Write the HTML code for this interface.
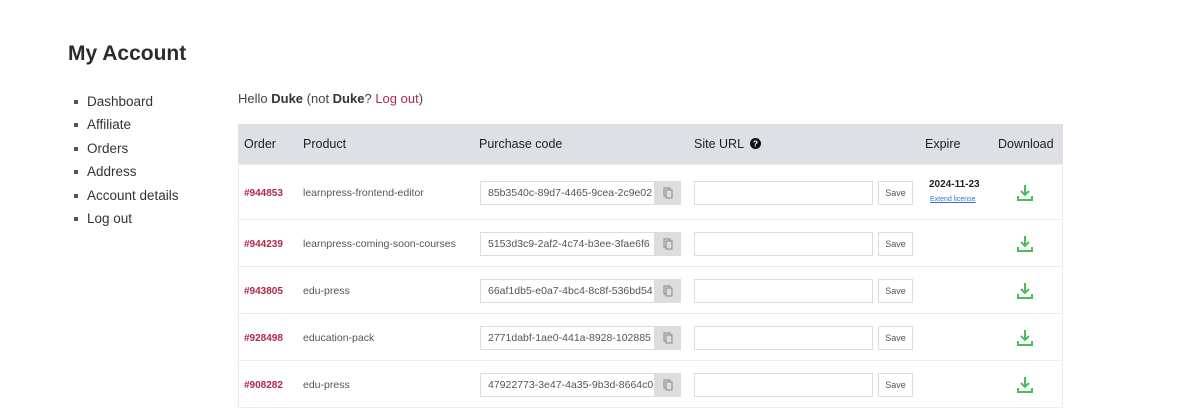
<!DOCTYPE html>
<html><head><meta charset="utf-8"><style>
*{box-sizing:border-box;margin:0;padding:0}
body{width:1200px;height:419px;background:#fff;font-family:"Liberation Sans",sans-serif;color:#333;position:relative;overflow:hidden}
.a{position:absolute;white-space:nowrap}
h1{position:absolute;left:68px;top:42px;font-size:21px;font-weight:bold;color:#2b2b2b}
.menu li{position:absolute;left:87px;font-size:13.5px;color:#333;list-style:none}
.menu li:before{content:"";position:absolute;left:-13px;top:6px;width:4px;height:4px;background:#555}
.tbl{position:absolute;left:238px;top:124px;width:825px;height:284px;border:1px solid #ececec;border-top:none}
.hd{position:absolute;left:238px;top:124px;width:825px;height:40px;background:#dde0e5}
.hd span{position:absolute;top:13px;font-size:12.5px;color:#222}
.row{position:absolute;left:238px;width:825px;border-top:1px solid #ececec}
.ord{position:absolute;left:6px;font-size:10px;font-weight:bold;color:#b0284a}
.prod{position:absolute;left:65px;font-size:10.5px;color:#555}
.pc{position:absolute;left:242px;width:201px;height:24px;border:1px solid #ddd;background:#fff;font-size:10.5px;color:#555;padding:5px 0 0 7px;overflow:hidden}
.pc .cp{position:absolute;right:0;top:0;width:26px;height:22px;background:#ddd}
.su{position:absolute;left:456px;width:179px;height:24px;border:1px solid #ddd;background:#fff}
.sv{position:absolute;left:640px;width:35px;height:24px;border:1px solid #ddd;background:#fff;font-size:9px;color:#555;text-align:center;line-height:22px}
.dl{position:absolute;left:779px}
</style></head><body>
<h1>My Account</h1>
<ul class="menu">
<li style="top:94px">Dashboard</li>
<li style="top:117px">Affiliate</li>
<li style="top:141px">Orders</li>
<li style="top:164px">Address</li>
<li style="top:188px">Account details</li>
<li style="top:211px">Log out</li>
</ul>
<div class="a" style="left:238px;top:91px;font-size:13px;color:#444">Hello <b style="color:#333">Duke</b> (not <b style="color:#333">Duke</b>? <span style="color:#b0284a">Log out</span>)</div>
<div class="tbl"></div>
<div class="hd">
<span style="left:6px">Order</span><span style="left:65px">Product</span><span style="left:241px">Purchase code</span>
<span style="left:456px">Site URL <svg width="11" height="11" viewBox="0 0 11 11" style="vertical-align:-1px;margin-left:3px"><circle cx="5.5" cy="5.5" r="5.5" fill="#111"/><text x="5.5" y="8.5" font-size="8.5" font-weight="bold" fill="#fff" text-anchor="middle" font-family="Liberation Sans">?</text></svg></span>
<span style="left:687px">Expire</span><span style="left:760px">Download</span>
</div>
<div class="row" style="top:164px;height:55px">
<div class="ord" style="top:23px">#944853</div><div class="prod" style="top:22px">learnpress-frontend-editor</div>
<div class="pc" style="top:16px">85b3540c-89d7-4465-9cea-2c9e02<div class="cp"><svg width="26" height="22"><rect x="10" y="6" width="6" height="8" fill="none" stroke="#888"/><rect x="12" y="8" width="6" height="8" fill="#ddd" stroke="#888"/></svg></div></div>
<div class="su" style="top:16px"></div><div class="sv" style="top:16px">Save</div>
<div class="a" style="left:691px;top:14px;font-size:10px;font-weight:bold;color:#222">2024-11-23</div>
<div class="a" style="left:692px;top:31px;font-size:7px;color:#3a6fd8;text-decoration:underline">Extend license</div>
<svg class="dl" style="top:19px" width="16" height="18" viewBox="0 0 16 18"><path d="M8 1v10M4 7l4 4 4-4M1 12v4h14v-4" fill="none" stroke="#4cbb5e" stroke-width="2"/></svg>
</div>
<div class="row" style="top:219px;height:47px">
<div class="ord" style="top:19px">#944239</div><div class="prod" style="top:18px">learnpress-coming-soon-courses</div>
<div class="pc" style="top:12px">5153d3c9-2af2-4c74-b3ee-3fae6f6<div class="cp"><svg width="26" height="22"><rect x="10" y="6" width="6" height="8" fill="none" stroke="#888"/><rect x="12" y="8" width="6" height="8" fill="#ddd" stroke="#888"/></svg></div></div>
<div class="su" style="top:12px"></div><div class="sv" style="top:12px">Save</div>
<svg class="dl" style="top:15px" width="16" height="18" viewBox="0 0 16 18"><path d="M8 1v10M4 7l4 4 4-4M1 12v4h14v-4" fill="none" stroke="#4cbb5e" stroke-width="2"/></svg>
</div>
<div class="row" style="top:266px;height:47px">
<div class="ord" style="top:19px">#943805</div><div class="prod" style="top:18px">edu-press</div>
<div class="pc" style="top:12px">66af1db5-e0a7-4bc4-8c8f-536bd54<div class="cp"><svg width="26" height="22"><rect x="10" y="6" width="6" height="8" fill="none" stroke="#888"/><rect x="12" y="8" width="6" height="8" fill="#ddd" stroke="#888"/></svg></div></div>
<div class="su" style="top:12px"></div><div class="sv" style="top:12px">Save</div>
<svg class="dl" style="top:15px" width="16" height="18" viewBox="0 0 16 18"><path d="M8 1v10M4 7l4 4 4-4M1 12v4h14v-4" fill="none" stroke="#4cbb5e" stroke-width="2"/></svg>
</div>
<div class="row" style="top:313px;height:47px">
<div class="ord" style="top:19px">#928498</div><div class="prod" style="top:18px">education-pack</div>
<div class="pc" style="top:12px">2771dabf-1ae0-441a-8928-102885<div class="cp"><svg width="26" height="22"><rect x="10" y="6" width="6" height="8" fill="none" stroke="#888"/><rect x="12" y="8" width="6" height="8" fill="#ddd" stroke="#888"/></svg></div></div>
<div class="su" style="top:12px"></div><div class="sv" style="top:12px">Save</div>
<svg class="dl" style="top:15px" width="16" height="18" viewBox="0 0 16 18"><path d="M8 1v10M4 7l4 4 4-4M1 12v4h14v-4" fill="none" stroke="#4cbb5e" stroke-width="2"/></svg>
</div>
<div class="row" style="top:360px;height:47px">
<div class="ord" style="top:19px">#908282</div><div class="prod" style="top:18px">edu-press</div>
<div class="pc" style="top:12px">47922773-3e47-4a35-9b3d-8664c0<div class="cp"><svg width="26" height="22"><rect x="10" y="6" width="6" height="8" fill="none" stroke="#888"/><rect x="12" y="8" width="6" height="8" fill="#ddd" stroke="#888"/></svg></div></div>
<div class="su" style="top:12px"></div><div class="sv" style="top:12px">Save</div>
<svg class="dl" style="top:15px" width="16" height="18" viewBox="0 0 16 18"><path d="M8 1v10M4 7l4 4 4-4M1 12v4h14v-4" fill="none" stroke="#4cbb5e" stroke-width="2"/></svg>
</div>
</body></html>
